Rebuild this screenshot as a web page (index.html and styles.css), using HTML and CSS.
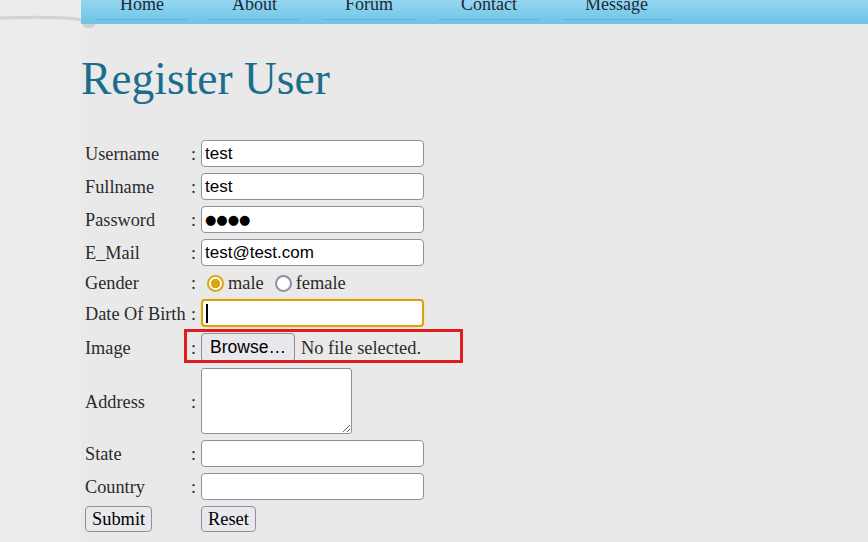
FILE: index.html
```html
<!DOCTYPE html>
<html>
<head>
<meta charset="utf-8">
<title>Register User</title>
<link rel="stylesheet" href="styles.css">
</head>
<body>
<div class="page">
  <svg class="curl" width="110" height="34" viewBox="0 0 110 34">
    <path d="M0 18 Q50 16 78 19 Q86 21 90 25" fill="none" stroke="#d2d2d2" stroke-width="3" stroke-linecap="round"/>
    <ellipse cx="89" cy="25" rx="6" ry="3" fill="#d0d0d0"/>
  </svg>
  <aside class="side"></aside>
  <main class="main">
    <nav class="nav">
      <ul class="menu">
        <li>Home</li>
        <li>About</li>
        <li>Forum</li>
        <li>Contact</li>
        <li>Message</li>
      </ul>
    </nav>
    <h1 class="title">Register User</h1>
    <form class="form">
      <label class="lbl">Username</label><span class="colon">:</span>
      <input class="field" type="text" value="test">

      <label class="lbl">Fullname</label><span class="colon">:</span>
      <input class="field" type="text" value="test">

      <label class="lbl">Password</label><span class="colon">:</span>
      <input class="field dots" type="text" value="●●●●">

      <label class="lbl">E_Mail</label><span class="colon">:</span>
      <input class="field" type="text" value="test@test.com">

      <label class="lbl">Gender</label><span class="colon">:</span>
      <span class="radios">
        <input class="radio" type="radio" name="g" checked><span class="rtxt">male</span>
        <input class="radio" type="radio" name="g"><span class="rtxt">female</span>
      </span>

      <label class="lbl">Date Of Birth</label><span class="colon">:</span>
      <span class="focuswrap"><input class="field focus" type="text" value=""><span class="caret"></span></span>

      <label class="lbl">Image</label><span class="colon">:</span>
      <span class="file"><button type="button" class="browse">Browse…</button><span class="nofile">No file selected.</span></span>

      <label class="lbl">Address</label><span class="colon">:</span>
      <textarea class="area"></textarea>

      <label class="lbl">State</label><span class="colon">:</span>
      <input class="field" type="text" value="">

      <label class="lbl">Country</label><span class="colon">:</span>
      <input class="field" type="text" value="">

      <span class="btncell"><button type="button" class="btn">Submit</button></span><span></span>
      <span class="btncell"><button type="button" class="btn">Reset</button></span>

      <div class="mark"></div>
    </form>
  </main>
</div>
</body>
</html>
```

FILE: styles.css
```css
html, body {
  margin: 0;
  padding: 0;
  height: 100%;
  overflow: hidden;
}
body {
  background: #e9e9e9;
  font-family: "Liberation Serif", "Times New Roman", serif;
  color: #222;
}
.page {
  position: relative;
  display: flex;
  min-height: 542px;
}
.curl {
  position: absolute;
  left: 0;
  top: 0;
  z-index: 1;
}
.side {
  width: 81px;
  flex: 0 0 81px;
  background: #ececec;
}
.main {
  flex: 1;
  display: flex;
  flex-direction: column;
}
.nav {
  position: relative;
  z-index: 2;
  height: 24px;
  overflow: hidden;
  background: linear-gradient(#95d6f1, #6dc4e6);
}
.menu {
  list-style: none;
  margin: -5px 0 0 0;
  padding: 0 0 0 16px;
  display: flex;
  gap: 22px;
}
.menu li {
  font-size: 18px;
  line-height: 18px;
  padding: 0 23px 6px;
  border-bottom: 1px solid #62b2d3;
  color: #1b2a33;
}
.title {
  margin: 28px 0 35px 0;
  font-size: 45.5px;
  line-height: 53px;
  font-weight: normal;
  color: #1a6e8d;
}
.form {
  position: relative;
  margin-left: 4px;
  display: grid;
  grid-template-columns: 106px 10px auto;
  grid-template-rows: 27px 27px 27px 27px 21px 28px 29px 66px 27px 27px 26px;
  row-gap: 6px;
  align-items: center;
  justify-items: start;
  font-size: 18px;
}
.lbl {
  font-size: 18.3px;
  padding-top: 2px;
  color: #2b2b2b;
}
.colon {
  font-size: 18px;
  padding-top: 2px;
  color: #2b2b2b;
}
.field {
  box-sizing: border-box;
  width: 223px;
  height: 27px;
  margin: 0;
  padding: 0 3px;
  border: 1px solid #8f8f9d;
  border-radius: 4px;
  background: #fff;
  font-family: "Liberation Sans", Arial, sans-serif;
  font-size: 17px;
  color: #000;
  outline: none;
}
.dots {
  font-family: "DejaVu Sans", sans-serif;
  font-size: 13px;
  letter-spacing: 0px;
}
.radios {
  display: flex;
  align-items: center;
  padding-left: 6px;
  padding-top: 2px;
}
.radio {
  appearance: none;
  -webkit-appearance: none;
  box-sizing: border-box;
  width: 17px;
  height: 17px;
  margin: 0 4px 0 0;
  border: 2px solid #8f8f9d;
  border-radius: 50%;
  background: #fff;
}
.radio:checked {
  border-color: #dca514;
  background: radial-gradient(circle, #dca514 0 4.5px, #fff 5px);
}
.rtxt {
  font-size: 18.4px;
  margin-right: 11px;
  color: #2b2b2b;
}
.focuswrap {
  position: relative;
  display: block;
}
.focus {
  height: 28px;
  border: 2px solid #d9a010;
  box-shadow: 0 0 0 1px #f3e3b8;
}
.caret {
  position: absolute;
  left: 5px;
  top: 5px;
  width: 2px;
  height: 19px;
  background: #000;
}
.file {
  display: flex;
  align-items: center;
}
.browse {
  box-sizing: border-box;
  height: 29px;
  width: 94px;
  margin: 0;
  padding: 0;
  border: 1px solid #8f8f9d;
  border-radius: 4px;
  background: #e9e9ed;
  font-family: "Liberation Sans", Arial, sans-serif;
  font-size: 17.5px;
  color: #000;
}
.nofile {
  margin-left: 6px;
  font-size: 18.4px;
  padding-top: 2px;
  color: #2b2b2b;
}
.area {
  box-sizing: border-box;
  width: 151px;
  height: 66px;
  margin: 0;
  border: 1px solid #8f8f9d;
  border-radius: 3px;
  background: #fff;
}
.btncell {
  display: block;
}
.btn {
  box-sizing: border-box;
  height: 26px;
  margin: 0;
  padding: 0 6px;
  border: 1px solid #8f8f9d;
  border-radius: 4px;
  background: #e9e9ed;
  font-family: "Liberation Serif", "Times New Roman", serif;
  font-size: 18.4px;
  color: #000;
}
.mark {
  position: absolute;
  left: 99px;
  top: 189px;
  width: 279px;
  height: 34px;
  box-sizing: border-box;
  border: 3px solid #e31b1f;
  pointer-events: none;
}
```
